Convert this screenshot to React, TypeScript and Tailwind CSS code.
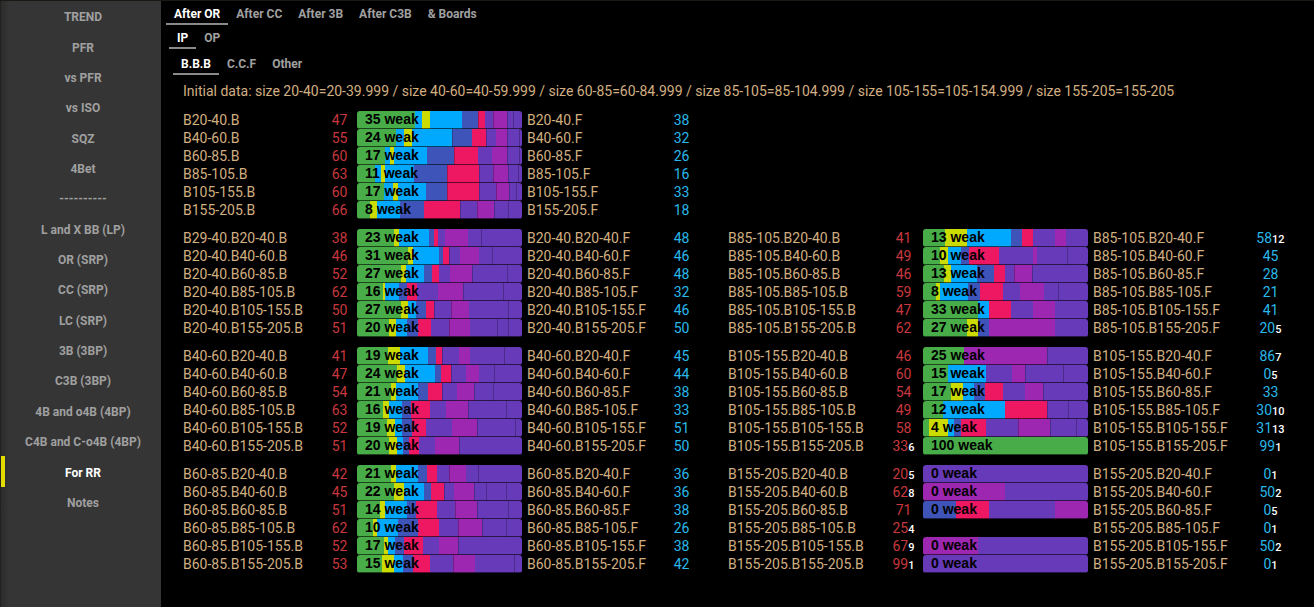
import { useState } from 'react';
import clsx from 'clsx';

// Bar segments are written as "<colour><end>", where end is measured on a 165 unit scale.
// An upper case colour draws a divider on the left edge of the segment.
const BAR_UNITS = 165;

const segmentColors: Record<string, string> = {
    g: 'bg-[#48ad48]',
    y: 'bg-[#cddc00]',
    b: 'bg-[#00a9fe]',
    n: 'bg-[#3f54b9]',
    r: 'bg-[#ee1862]',
    p: 'bg-[#673ab9]',
    m: 'bg-[#9e27b2]',
};

type Entry = {
    name: string;
    bet: string;
    betSample?: string;
    weak?: number;
    bar?: string;
    fold: string;
    foldSample?: string;
    label?: string;
};

type Group = { left: Entry[]; right?: Entry[] };

const groups: Group[] = [
    {
        left: [
            { name: 'B20-40', bet: '47', weak: 35, bar: 'g58 b65 y73 b105 n121 R128 p136 M150 P156 P165', fold: '38' },
            { name: 'B40-60', bet: '55', weak: 24, bar: 'g39 b47 y55 b95 N115 r129 P139 m150 P162 P165', fold: '32' },
            { name: 'B60-85', bet: '60', weak: 17, bar: 'g28 b33 y37 b70 n97 R121 p135 m150 P162 P165', fold: '26' },
            { name: 'B85-105', bet: '63', weak: 11, bar: 'g18 b24 y28 b57 n90 R122 P136 M151 P161 P165', fold: '16' },
            { name: 'B105-155', bet: '60', weak: 17, bar: 'g27 b36 y41 b69 n90 R122 P139 M152 P159 P165', fold: '33' },
            { name: 'B155-205', bet: '66', weak: 8, bar: 'g13 y20 b43 n67 r103 P120 M137 P151 P165', fold: '18' },
        ],
    },
    {
        left: [
            { name: 'B20-40.B20-40', label: 'B29-40.B20-40', bet: '38', weak: 23, bar: 'g37 y42 b72 n77 r81 p88 m111 p124 P165', fold: '48' },
            { name: 'B20-40.B40-60', bet: '46', weak: 31, bar: 'g51 y56 b82 n86 r92 P103 m122 p135 P165', fold: '46' },
            { name: 'B20-40.B60-85', bet: '52', weak: 27, bar: 'g44 y49 b67 n75 r82 p93 m115 P150 P165', fold: '48' },
            { name: 'B20-40.B85-105', bet: '62', weak: 16, bar: 'g26 y28 b42 n50 r60 p81 m106 P146 P165', fold: '32' },
            { name: 'B20-40.B105-155', bet: '50', weak: 27, bar: 'g44 y51 b59 n69 r77 P94 M112 p151 P165', fold: '46' },
            { name: 'B20-40.B155-205', bet: '51', weak: 20, bar: 'g32 y39 b50 n61 r74 p92 M113 p140 P151 P165', fold: '50' },
        ],
        right: [
            { name: 'B85-105.B20-40', bet: '41', weak: 13, bar: 'g22 y44 b88 n99 r110 p132 m143 p165', fold: '58', foldSample: '12' },
            { name: 'B85-105.B40-60', bet: '49', weak: 10, bar: 'g17 y25 b38 n46 r76 p110 m114 p144 P165', fold: '45' },
            { name: 'B85-105.B60-85', bet: '46', weak: 13, bar: 'g21 y28 b54 n71 r82 p91 M109 P165', fold: '28' },
            { name: 'B85-105.B85-105', bet: '59', weak: 8, bar: 'g13 y17 b45 n57 r80 p97 m121 p135 P165', fold: '21' },
            { name: 'B85-105.B105-155', bet: '47', weak: 33, bar: 'g55 b66 r88 p110 m132 p165', fold: '41' },
            { name: 'B85-105.B155-205', bet: '62', weak: 27, bar: 'g44 y55 n66 m132 p165', fold: '20', foldSample: '5' },
        ],
    },
    {
        left: [
            { name: 'B40-60.B20-40', bet: '41', weak: 19, bar: 'g31 y43 b71 n79 r85 P102 m113 p147 P165', fold: '45' },
            { name: 'B40-60.B40-60', bet: '47', weak: 24, bar: 'g40 y48 b78 n84 r94 P109 m122 p137 P165', fold: '44' },
            { name: 'B40-60.B60-85', bet: '54', weak: 21, bar: 'g34 y39 b61 n71 r85 P100 m117 P136 P165', fold: '38' },
            { name: 'B40-60.B85-105', bet: '63', weak: 16, bar: 'g26 y32 b45 n54 r73 p89 m111 P149 P165', fold: '33' },
            { name: 'B40-60.B105-155', bet: '52', weak: 19, bar: 'g30 y38 b45 n55 r69 p95 m120 P158 P165', fold: '51' },
            { name: 'B40-60.B155-205', bet: '51', weak: 20, bar: 'g32 y40 b46 n52 r62 p78 m102 P165', fold: '50' },
        ],
        right: [
            { name: 'B105-155.B20-40', bet: '46', weak: 25, bar: 'g41 m124 P165', fold: '86', foldSample: '7' },
            { name: 'B105-155.B40-60', bet: '60', weak: 15, bar: 'g25 b63 p89 m102 P140 P165', fold: '0', foldSample: '5' },
            { name: 'B105-155.B60-85', bet: '54', weak: 17, bar: 'g28 y40 b51 n62 r80 p102 m120 P165', fold: '33' },
            { name: 'B105-155.B85-105', bet: '49', weak: 12, bar: 'g20 b82 r124 P145 P165', fold: '30', foldSample: '10' },
            { name: 'B105-155.B105-155', bet: '58', weak: 4, bar: 'g6 y25 b31 n38 r63 p95 M127 P153 P165', fold: '31', foldSample: '13' },
            { name: 'B105-155.B155-205', bet: '33', betSample: '6', weak: 100, bar: 'g165', fold: '99', foldSample: '1' },
        ],
    },
    {
        left: [
            { name: 'B60-85.B20-40', bet: '42', weak: 21, bar: 'g34 y39 b61 n70 r80 p92 M109 p121 P165', fold: '36' },
            { name: 'B60-85.B40-60', bet: '45', weak: 22, bar: 'g37 y47 b67 n74 r87 P97 m117 P129 P149 P165', fold: '36' },
            { name: 'B60-85.B60-85', bet: '51', weak: 14, bar: 'g23 y28 b50 n59 r80 p98 M120 P151 P165', fold: '38' },
            { name: 'B60-85.B85-105', bet: '62', weak: 10, bar: 'g16 y20 b41 n61 r82 p101 M125 P149 P165', fold: '26' },
            { name: 'B60-85.B105-155', bet: '52', weak: 17, bar: 'g27 y31 b38 n47 r66 p82 m101 P165', fold: '38' },
            { name: 'B60-85.B155-205', bet: '53', weak: 15, bar: 'g25 y37 b46 n56 r73 p96 M118 p157 P165', fold: '42' },
        ],
        right: [
            { name: 'B155-205.B20-40', bet: '20', betSample: '5', weak: 0, bar: 'p165', fold: '0', foldSample: '1' },
            { name: 'B155-205.B40-60', bet: '62', betSample: '8', weak: 0, bar: 'm82 p165', fold: '50', foldSample: '2' },
            { name: 'B155-205.B60-85', bet: '71', weak: 0, bar: 'n33 r66 p132 m165', fold: '0', foldSample: '5' },
            { name: 'B155-205.B85-105', bet: '25', betSample: '4', fold: '0', foldSample: '1' },
            { name: 'B155-205.B105-155', bet: '67', betSample: '9', weak: 0, bar: 'm55 p165', fold: '50', foldSample: '2' },
            { name: 'B155-205.B155-205', bet: '99', betSample: '1', weak: 0, bar: 'p165', fold: '0', foldSample: '1' },
        ],
    },
];

const menu = [
    'TREND', 'PFR', 'vs PFR', 'vs ISO', 'SQZ', '4Bet', '----------',
    'L and X BB (LP)', 'OR (SRP)', 'CC (SRP)', 'LC (SRP)', '3B (3BP)', 'C3B (3BP)',
    '4B and o4B (4BP)', 'C4B and C-o4B (4BP)', 'For RR', 'Notes',
];

function Sidebar() {
    const [active, setActive] = useState('For RR');

    return (
        <nav className="w-[161px] shrink-0 border-l border-[#231f1d] bg-linear-to-r from-[#2b2b2b] to-[#353535] to-5%">
            <ul className="flex h-[516px] flex-col">
                {menu.map((item) => (
                    <li key={item} className="flex flex-1">
                        <button
                            onClick={() => setActive(item)}
                            className={clsx(
                                'flex-1 border-l-4 pt-0.5 text-center text-xs font-bold',
                                item === active ? 'border-[#e2dc00] text-white' : 'border-transparent text-[#a0a0a0]'
                            )}
                        >
                            {item}
                        </button>
                    </li>
                ))}
            </ul>
        </nav>
    );
}

function Tabs({ items, className }: { items: string[]; className?: string }) {
    const [active, setActive] = useState(items[0]);

    return (
        <div role="tablist" className={clsx('flex h-6', className)}>
            {items.map((item) => (
                <button
                    key={item}
                    role="tab"
                    aria-selected={item === active}
                    onClick={() => setActive(item)}
                    className={clsx(
                        'border-b-2 px-2 pt-1 text-xs font-bold',
                        item === active ? 'border-[#8a8a8a] text-white' : 'border-transparent text-[#a0a0a0]'
                    )}
                >
                    {item}
                </button>
            ))}
        </div>
    );
}

function StrengthBar({ weak, bar }: { weak: number; bar: string }) {
    let start = 0;
    const segments = bar.split(' ').map((part) => {
        const end = Number(part.slice(1));
        const width = ((end - start) / BAR_UNITS) * 100;
        start = end;
        return { code: part[0], width };
    });

    return (
        <div className="relative h-[18px] overflow-hidden rounded-[3px]">
            <div className="flex h-full">
                {segments.map(({ code, width }, i) => (
                    <div
                        key={i}
                        className={clsx(
                            segmentColors[code.toLowerCase()],
                            code < 'a' && 'border-l border-black/25'
                        )}
                        style={{ width: `${width}%` }}
                    />
                ))}
            </div>
            <span className="absolute inset-0 border-b border-black/60 pl-2 font-['Liberation_Sans',sans-serif] text-sm leading-4 font-bold text-black">
                {weak} weak
            </span>
        </div>
    );
}

function Stat({ value, sample, className }: { value: string; sample?: string; className: string }) {
    return (
        <td className={clsx('text-center', className)}>
            {value}
            {sample && <span className="text-[11px] leading-none font-medium text-white">{sample}</span>}
        </td>
    );
}

function EntryCells({ entry, side }: { entry: Entry; side: 'left' | 'right' }) {
    return (
        <>
            <td>{entry.label ?? entry.name}.B</td>
            <Stat
                value={entry.bet}
                sample={entry.betSample}
                className={clsx('text-[#c8383e]', side === 'left' ? 'pr-0.5' : 'pr-1')}
            />
            <td className="pr-[5px]">
                {entry.bar && <StrengthBar weak={entry.weak ?? 0} bar={entry.bar} />}
            </td>
            <td>{entry.name}.F</td>
            <Stat value={entry.fold} sample={entry.foldSample} className={clsx('text-[#29b9ea]', side === 'left' && 'pr-8')} />
        </>
    );
}

export default function App() {
    return (
        <div className="flex min-h-screen border-t border-[#1a1a14] bg-black font-[Roboto,sans-serif]">
            <Sidebar />
            <main className="min-w-0 flex-1">
                <Tabs items={['After OR', 'After CC', 'After 3B', 'After C3B', '& Boards']} className="pl-[5px]" />
                <Tabs items={['IP', 'OP']} className="pl-2" />
                <Tabs items={['B.B.B', 'C.C.F', 'Other']} className="mt-0.5 pl-3" />

                <div className="pr-7 pl-[22px] text-sm leading-[18px] whitespace-nowrap text-[#d2af80]">
                    <p className="mt-[7px] mb-[11px]">
                        Initial data: size 20-40=20-39.999 / size 40-60=40-59.999 / size 60-85=60-84.999 / size 85-105=85-104.999 / size 105-155=105-154.999 / size 155-205=155-205
                    </p>

                    <table className="w-full table-fixed">
                        <colgroup>
                            <col className="w-[141px]" />
                            <col className="w-[33px]" />
                            <col className="w-[170px]" />
                            <col className="w-[140px]" />
                            <col className="w-[61px]" />
                            <col className="w-[160px]" />
                            <col className="w-[35px]" />
                            <col className="w-[170px]" />
                            <col className="w-[162px]" />
                            <col className="w-[31px]" />
                        </colgroup>
                        {groups.map(({ left, right }, g) => (
                            <tbody key={g}>
                                {g > 0 && <tr><td colSpan={10} className="h-2.5" /></tr>}
                                {left.map((entry, i) => (
                                    <tr key={entry.name} className="h-[18px]">
                                        <EntryCells entry={entry} side="left" />
                                        {right ? <EntryCells entry={right[i]} side="right" /> : <td colSpan={5} />}
                                    </tr>
                                ))}
                            </tbody>
                        ))}
                    </table>
                </div>
            </main>
        </div>
    );
}
